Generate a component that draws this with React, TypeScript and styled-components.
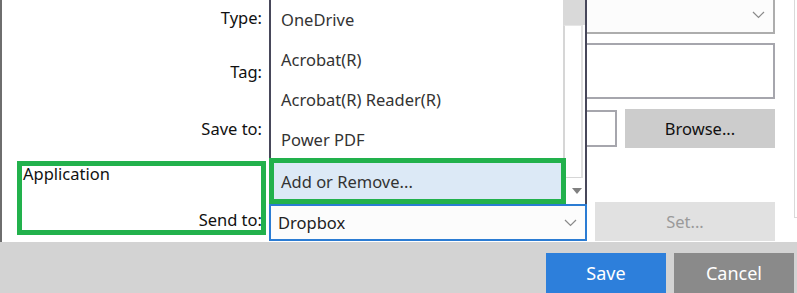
import React from 'react';
import styled, { createGlobalStyle } from 'styled-components';

const GlobalStyle = createGlobalStyle`
  html, body {
    margin: 0;
    padding: 0;
    overflow: hidden;
    background: #ffffff;
  }
  body {
    font-family: "Noto Sans", "Open Sans", Arial, sans-serif;
  }
`

const Page = styled.div`
  width: 797px;
  height: 293px;
  display: flex;
  flex-direction: column;
  overflow: hidden;
`
const Body = styled.div`
  height: 242px;
  display: flex;
  background: #ffffff;
  border-left: 2px solid #6e6e6e;
  box-sizing: border-box;
`
const Form = styled.div`
  display: flex;
  flex-direction: column;
`
const Row = styled.div<{ $top: number; $height: number }>`
  display: grid;
  grid-template-columns: 260px 506px;
  column-gap: 7px;
  margin-top: ${p => p.$top}px;
  height: ${p => p.$height}px;
`
const Label = styled.div<{ $shift?: number }>`
  display: flex;
  align-items: center;
  justify-content: flex-end;
  padding-top: ${p => p.$shift || 0}px;
  font-size: 16.5px;
  color: #111111;
`
const Gutter = styled.div`
  margin-left: auto;
  width: 2px;
  height: 217px;
  border-left: 1px solid #d9d9d9;
  border-bottom: 1px solid #d9d9d9;
`
const Combo = styled.div<{ $focus?: boolean }>`
  display: flex;
  align-items: center;
  justify-content: space-between;
  box-sizing: border-box;
  height: 100%;
  padding: 0 8px 0 7px;
  background: #fcfcfc;
  border: 2px solid ${p => (p.$focus ? '#2b7cd3' : '#adadad')};
  font-size: 16.5px;
  color: #222222;
`
const TextBox = styled.div<{ $width?: number; $height?: number }>`
  box-sizing: border-box;
  height: ${p => (p.$height ? `${p.$height}px` : '100%')};
  width: ${p => (p.$width ? `${p.$width}px` : '100%')};
  background: #ffffff;
  border: 2px solid #a6a6ad;
`
const FieldRow = styled.div<{ $align: string }>`
  display: flex;
  align-items: ${p => p.$align};
  gap: 8px;
`
const Button = styled.div<{ $bg: string; $fg: string; $w?: number; $h: number; $size?: number }>`
  display: flex;
  align-items: center;
  justify-content: center;
  box-sizing: border-box;
  height: ${p => p.$h}px;
  ${p => (p.$w ? `width: ${p.$w}px;` : 'flex: 1;')}
  background: ${p => p.$bg};
  color: ${p => p.$fg};
  font-size: ${p => p.$size || 16.5}px;
`
const AppBox = styled.div`
  margin-left: 15px;
  margin-right: -4px;
  height: 74px;
  box-sizing: border-box;
  border: 5px solid #22b14c;
  display: flex;
  flex-direction: column;
  justify-content: space-between;
  font-size: 16.5px;
  line-height: 18px;
  color: #111111;
`
const AppTitle = styled.div`
  padding-left: 1px;
  margin-top: -1px;
`
const AppLabel = styled.div`
  text-align: right;
  margin-right: -1px;
  margin-bottom: 1px;
`
const ComboWrap = styled.div`
  position: relative;
  width: 318px;
  height: 37px;
`
const List = styled.div`
  position: absolute;
  left: 0;
  bottom: 100%;
  width: 318px;
  display: flex;
  box-sizing: border-box;
  border-left: 2px solid #47475a;
  border-right: 2px solid #47475a;
  background: #ffffff;
  z-index: 2;
`
const Items = styled.div`
  flex: 1;
  display: flex;
  flex-direction: column;
`
const Item = styled.div`
  height: 40px;
  display: flex;
  align-items: center;
  padding: 1px 0 0 10px;
  box-sizing: border-box;
  font-size: 16.5px;
  color: #333333;
`
const Picked = styled.div`
  position: relative;
  z-index: 3;
  height: 46px;
  margin: -1px -3px 0 -2px;
  box-sizing: border-box;
  border: 5px solid #22b14c;
  background: #dce9f6;
  display: flex;
  align-items: center;
  padding-left: 7px;
  font-size: 16.5px;
  color: #333333;
`
const ScrollBar = styled.div`
  width: 22px;
  display: flex;
  flex-direction: column;
`
const Thumb = styled.div`
  height: 26px;
  background: #d9d9d9;
`
const Track = styled.div`
  flex: 1;
  background: #ffffff;
  border-top: 1px solid #e6e6e6;
  border-left: 2px solid #d6d6d6;
  border-right: 2px solid #e0e0e0;
  border-bottom: 1px solid #d6d6d6;
  margin-right: 2px;
`
const ArrowButton = styled.div`
  height: 26px;
  display: flex;
  align-items: center;
  justify-content: center;
  padding-left: 4px;
  border-left: 2px solid #d6d6d6;
  box-sizing: border-box;
`
const Footer = styled.div`
  flex: 1;
  background: #d3d3d3;
  display: flex;
  justify-content: flex-end;
  align-items: flex-start;
  gap: 8px;
  padding: 11px 3px 0 0;
`

const Chevron = () => (
  <svg width="13" height="8" viewBox="0 0 13 8">
    <polyline points="1,1 6.5,6.5 12,1" fill="none" stroke="#8a8a8a" strokeWidth="1.2" />
  </svg>
)

const DownTriangle = () => (
  <svg width="10" height="6" viewBox="0 0 10 6">
    <polygon points="0,0 10,0 5,6" fill="#808080" />
  </svg>
)

const apps = ['OneDrive', 'Acrobat(R)', 'Acrobat(R) Reader(R)', 'Power PDF']

export default function App() {
  return (
    <Page>
      <GlobalStyle />
      <Body>
        <Form>
          <Row $top={-4} $height={38}>
            <Label $shift={4}>Type:</Label>
            <Combo>
              <span />
              <Chevron />
            </Combo>
          </Row>
          <Row $top={9} $height={56}>
            <Label>Tag:</Label>
            <TextBox />
          </Row>
          <Row $top={10} $height={39}>
            <Label>Save to:</Label>
            <FieldRow $align="center">
              <TextBox $width={348} $height={37} />
              <Button $bg="#cccccc" $fg="#111111" $h={39}>Browse...</Button>
            </FieldRow>
          </Row>
          <Row $top={13} $height={80}>
            <AppBox>
              <AppTitle>Application</AppTitle>
              <AppLabel>Send to:</AppLabel>
            </AppBox>
            <FieldRow $align="flex-end">
              <ComboWrap>
                <List>
                  <Items>
                    {apps.map(a => (
                      <Item key={a}>{a}</Item>
                    ))}
                    <Picked>Add or Remove...</Picked>
                  </Items>
                  <ScrollBar>
                    <Thumb />
                    <Track />
                    <ArrowButton>
                      <DownTriangle />
                    </ArrowButton>
                  </ScrollBar>
                </List>
                <Combo $focus>
                  <span>Dropbox</span>
                  <Chevron />
                </Combo>
              </ComboWrap>
              <Button $bg="#e1e1e1" $fg="#9a9a9a" $h={39}>Set...</Button>
            </FieldRow>
          </Row>
        </Form>
        <Gutter />
      </Body>
      <Footer>
        <Button $bg="#2d7fdb" $fg="#ffffff" $w={120} $h={40} $size={18}>Save</Button>
        <Button $bg="#8a8a8a" $fg="#ffffff" $w={120} $h={40} $size={18}>Cancel</Button>
      </Footer>
    </Page>
  )
}
